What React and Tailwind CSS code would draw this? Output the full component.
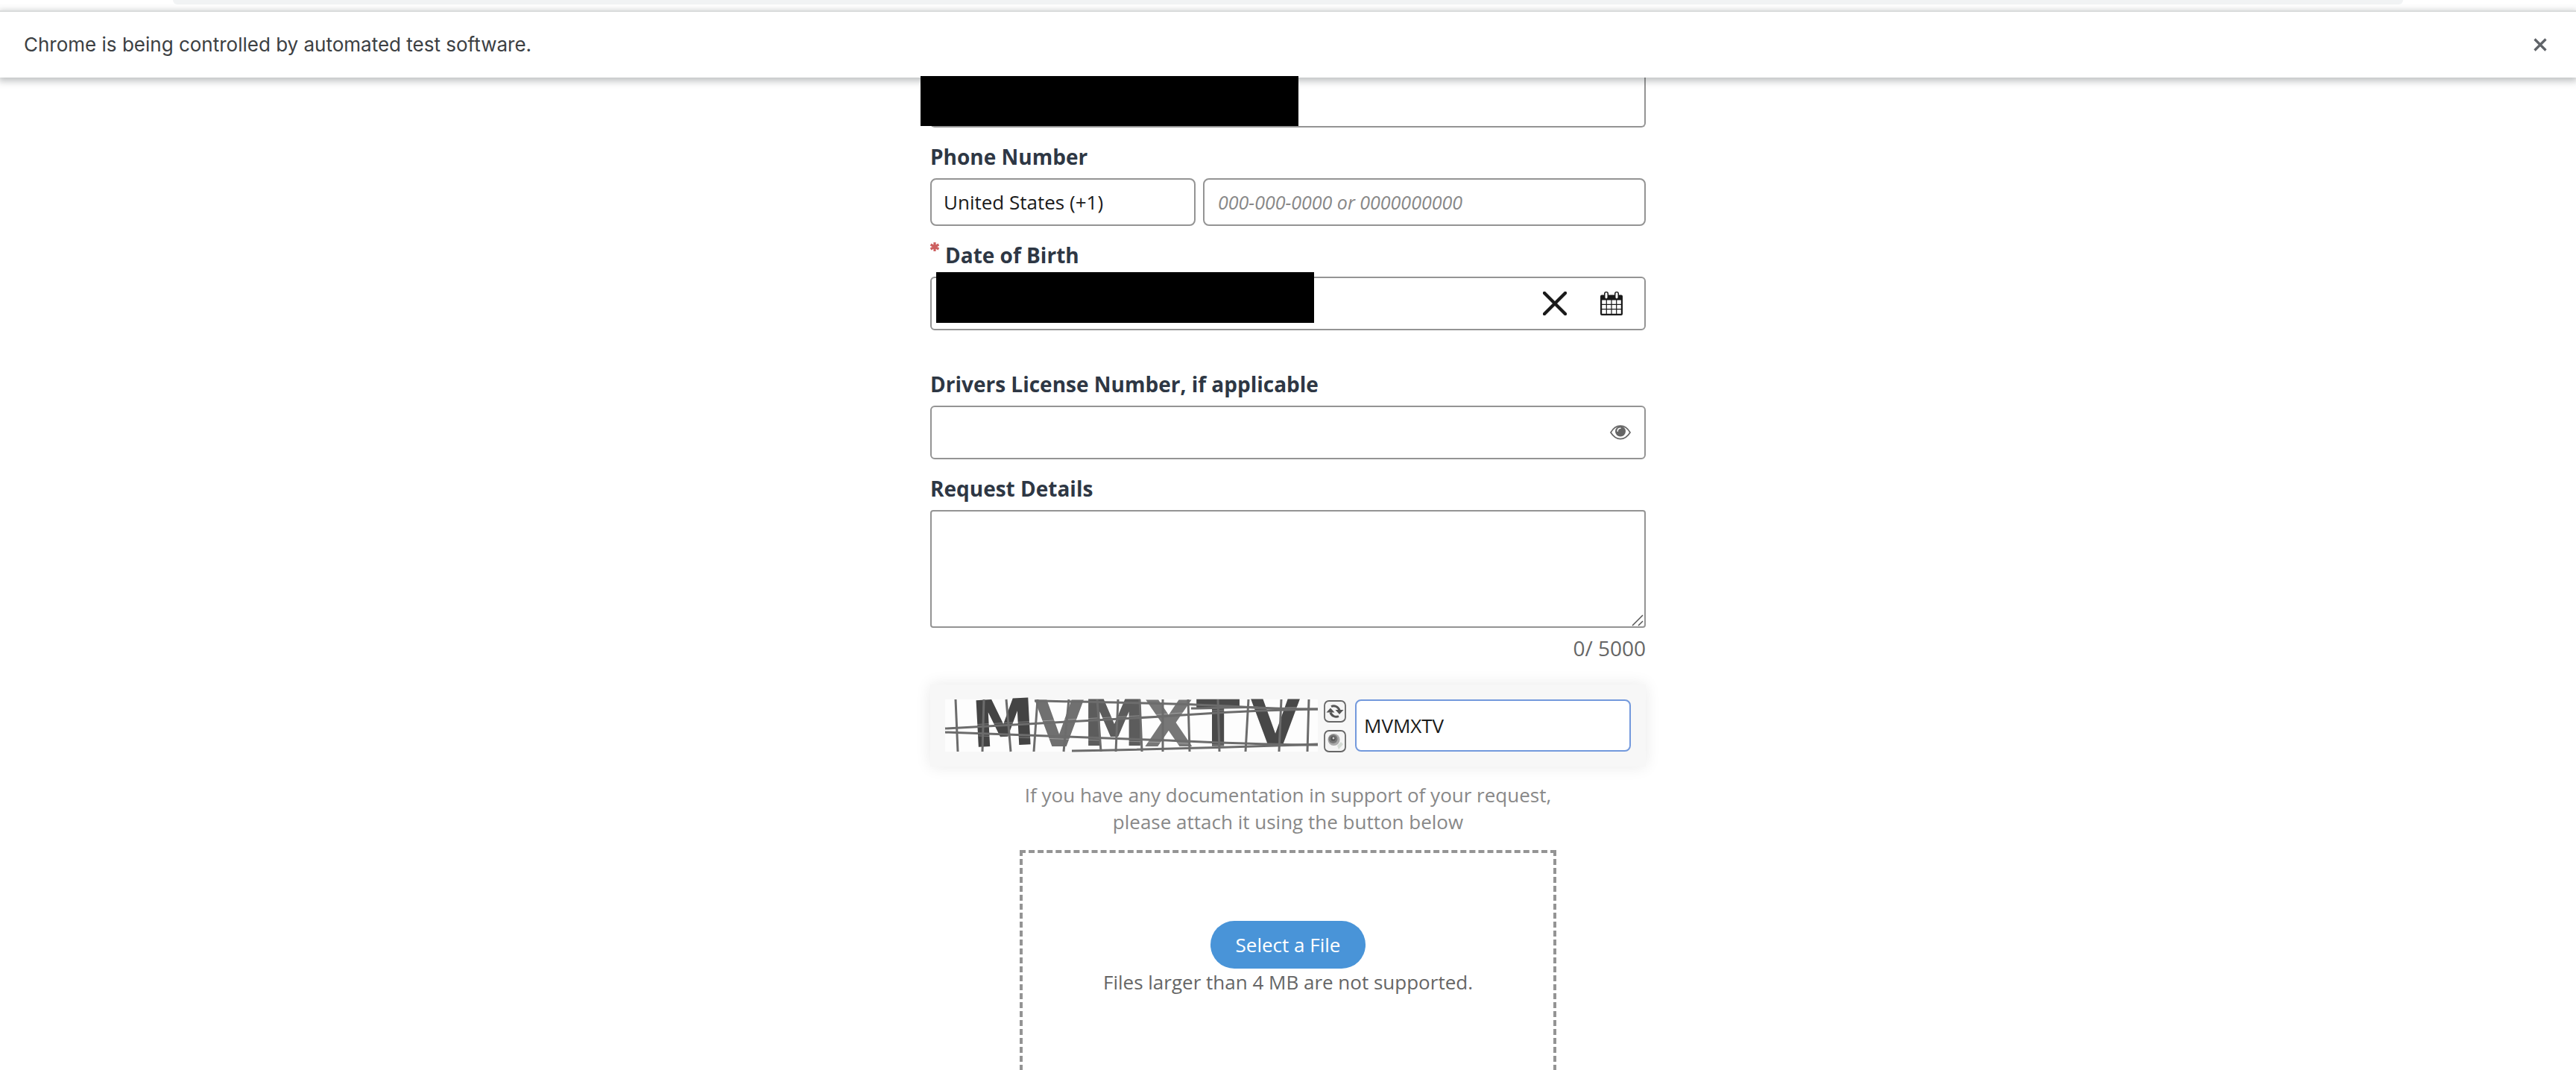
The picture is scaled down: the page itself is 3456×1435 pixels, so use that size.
import React from "react";

const FIELD = "w-full border-2 border-[#949494] bg-white text-[26px] text-[#1a1a1a] outline-none";

function Label({ htmlFor, required, children }) {
  return (
    <label
      htmlFor={htmlFor}
      className="mb-[9px] mt-[19px] flex gap-2 text-[28px] font-bold leading-10 text-[#2e3744]"
    >
      {required && <RequiredMark />}
      <span>{children}</span>
    </label>
  );
}

function RequiredMark() {
  return (
    <svg viewBox="0 0 12 12" className="mt-[3px] size-3" aria-label="required">
      <g stroke="#cd6060" strokeWidth="3.2">
        <path d="M6 0v12M0.6 3l10.8 6M0.6 9l10.8-6" />
      </g>
    </svg>
  );
}

function CalendarIcon() {
  return (
    <svg viewBox="0 0 30 32" className="h-8 w-[30px]" aria-hidden="true">
      <path
        fill="#1a1a1a"
        fillRule="evenodd"
        d="M2 4.5h3V3a3 3 0 0 1 6 0v1.500h8V3a3 3 0 0 1 6 0v1.500h3a2 2 0 0 1 2 2V30a2 2 0 0 1-2 2H2a2 2 0 0 1-2-2V6.500a2 2 0 0 1 2-2ZM2.200 11.500v18.200h25.600V11.500Z"
      />
      <path d="M8 2.800v5M22 2.800v5" stroke="#fff" strokeWidth="3" strokeLinecap="round" />
      <path
        d="M8.300 11v19M15 11v19M21.700 11v19M2 17.300h26M2 23.700h26"
        stroke="#1a1a1a"
        strokeWidth="1.200"
      />
    </svg>
  );
}

function EyeIcon() {
  return (
    <svg viewBox="0 0 28 20" className="h-5 w-7" aria-hidden="true">
      <path
        d="M1 10C4.500 4 9 1.200 14 1.200S23.500 4 27 10c-3.500 5.600-8 8.600-13 8.600S4.500 15.600 1 10Z"
        fill="none"
        stroke="#666"
        strokeWidth="1.700"
      />
      <circle cx="14" cy="8.500" r="7" fill="#666" />
      <path d="M10.200 8.200a4 4 0 0 1 3.800-4" fill="none" stroke="#fff" strokeWidth="1.500" strokeLinecap="round" />
    </svg>
  );
}

function CaptchaImage() {
  return (
    <svg
      viewBox="0 0 500 70"
      className="h-[70px] w-[500px] shrink-0 overflow-visible bg-[#fdfdfd]"
      role="img"
      aria-label="Captcha challenge"
    >
      <g fontFamily="DejaVu Sans" fontWeight="bold" fontSize="86" textAnchor="middle">
        <text x="78" y="62" fill="#444444" transform="rotate(-3 78 30)">M</text>
        <text x="153" y="63" fill="#707070">V</text>
        <text x="227" y="62" fill="#5c5c5c">M</text>
        <text x="300" y="63" fill="#777777">X</text>
        <text x="366" y="62" fill="#4a4a4a">T</text>
        <text x="443" y="62" fill="#484848">V</text>
      </g>
      <g fill="none" stroke="#fdfdfd" strokeOpacity="0.3" strokeWidth="1">
        <path d="M0 36C120 29 230 24 290 20C370 14 430 11 500 10" />
        <path d="M0 47C120 52 210 55 300 58C370 61 430 64 500 64" />
      </g>
      <g fill="none" stroke="#6c6c6c" strokeWidth="3">
        <path d="M14 0l3 70M52 0l-2 70M82 0l6 70M124 0l-5 70M166 0l-7 70M204 0l5 70M232 0l-3 70M261 0l3 70M292 0v70M326 0l2 70M366 0l2 70M407 0l-4 70M451 0l-3 70M488 0l-2 70" />
        <path d="M0 39C120 32 230 27 290 23C370 17 430 14 500 13" />
        <path d="M0 44C120 49 210 52 300 55C370 58 430 61 500 61" />
        <path d="M120 2C240 4 330 6 380 9C430 12 460 13 500 13" />
        <path d="M330 12C370 12 400 9 420 11" />
        <path d="M170 69C290 67 360 65 500 60" />
      </g>
    </svg>
  );
}

function IconFrame({ label, children }) {
  return (
    <button type="button" aria-label={label} className="size-[30px]">
      <svg viewBox="0 0 30 30" className="size-[30px]">
        <rect x="1" y="1" width="28" height="28" rx="6" fill="#f4f4f4" stroke="#666" strokeWidth="1.800" />
        {children}
      </svg>
    </button>
  );
}

function Redaction({ className }) {
  return <div aria-hidden="true" className={`absolute bg-black ${className}`} />;
}

function InfoBar() {
  return (
    <header className="relative z-10 shrink-0">
      <div className="h-[14px] bg-white px-[232px]">
        <div className="h-[6px] rounded-b-2xl bg-[#f1f3f4]" />
      </div>
      <div className="flex h-[90px] items-center justify-between border-t-2 border-[#dadcdc] bg-white px-8 shadow-[0_3px_9px_2px_rgba(60,64,67,0.32)]">
        <p className="font-['Inter'] text-[26px] leading-8 text-[#3c4043]">
          Chrome is being controlled by automated test software.
        </p>
        <button type="button" aria-label="Close" className="grid w-8 place-items-center">
          <svg viewBox="0 0 18 18" className="size-[18px]">
            <path d="M1.500 1.500l15 15M16.500 1.500l-15 15" stroke="#5f6368" strokeWidth="3.200" />
          </svg>
        </button>
      </div>
    </header>
  );
}

export default function App() {
  return (
    <div className="flex h-screen flex-col overflow-hidden bg-white font-['Open_Sans',sans-serif]">
      <InfoBar />
      <form className="mx-auto w-full max-w-[960px] shrink-0">
        <div className="relative">
          <input aria-label="Email" className={`${FIELD} block h-[67px] rounded-b-md border-t-0`} />
          <Redaction className="-left-[13px] -top-[2px] z-20 h-[67px] w-[507px]" />
        </div>

        <Label htmlFor="phone">Phone Number</Label>
        <div className="flex gap-[10px]">
          <select
            aria-label="Country code"
            className={`${FIELD} h-16 max-w-[356px] appearance-none rounded-lg px-4`}
          >
            <option>United States (+1)</option>
          </select>
          <input
            id="phone"
            type="tel"
            placeholder="000-000-0000 or 0000000000"
            className={`${FIELD} h-16 min-w-0 flex-1 rounded-lg px-[18px] placeholder:text-[25px] placeholder:italic placeholder:text-[#888]`}
          />
        </div>

        <Label htmlFor="dob" required>Date of Birth</Label>
        <div className="relative flex h-[72px] items-center rounded-md border-2 border-[#949494] pr-[29px]">
          <input id="dob" className="h-full min-w-0 flex-1 bg-transparent pl-4 text-[26px] outline-none" />
          <button type="button" aria-label="Clear date" className="mr-[45px]">
            <svg viewBox="0 0 32 32" className="size-8">
              <path d="M2 2l28 28M30 2L2 30" stroke="#1a1a1a" strokeWidth="4.400" strokeLinecap="round" />
            </svg>
          </button>
          <button type="button" aria-label="Open calendar">
            <CalendarIcon />
          </button>
          <Redaction className="-top-2 left-[6px] h-[68px] w-[507px]" />
        </div>

        <div className="mt-[52px]">
          <Label htmlFor="license">Drivers License Number, if applicable</Label>
        </div>
        <div className="flex h-[72px] items-center rounded-md border-2 border-[#949494] pr-[18px]">
          <input id="license" className="h-full min-w-0 flex-1 bg-transparent pl-4 text-[26px] outline-none" />
          <button type="button" aria-label="Show value">
            <EyeIcon />
          </button>
        </div>

        <Label htmlFor="details">Request Details</Label>
        <div className="relative">
          <textarea id="details" className={`${FIELD} block h-[158px] resize-none rounded px-4 py-2`} />
          <svg viewBox="0 0 16 16" className="absolute bottom-[2px] right-[3px] size-4" aria-hidden="true">
            <path d="M1 15L15 1M9 15l6-6" stroke="#555" strokeWidth="1.500" />
          </svg>
        </div>
        <p className="mt-[7px] text-right text-[28px] leading-10 text-[#666]">0/ 5000</p>

        <div className="mt-[29px] flex h-[110px] items-center bg-[#f7f7f7] px-5 shadow-[0_0_20px_rgba(0,0,0,0.09)]">
          <CaptchaImage />
          <div className="ml-2 flex flex-col gap-[10px] pt-[2px]">
            <IconFrame label="New captcha">
              <g fill="none" stroke="#555" strokeWidth="3">
                <path d="M10 8.500a8 8 0 0 1 11 5" />
                <path d="M20 21.500a8 8 0 0 1-11-5" />
              </g>
              <path d="M15.500 13h11L21 19ZM3.500 16.500h11L9 10.500Z" fill="#555" />
            </IconFrame>
            <IconFrame label="Play audio captcha">
              <path d="M18 21l5-5 3 3-6 7Z" fill="#d5dbd5" />
              <circle cx="13.500" cy="13" r="8" fill="#aaa" />
              <circle cx="12.500" cy="12" r="6" fill="#777" />
              <circle cx="12.500" cy="11.500" r="3.200" fill="#555" />
              <circle cx="13" cy="11" r="1.400" fill="#ccc" />
            </IconFrame>
          </div>
          <input
            aria-label="Captcha text"
            defaultValue="MVMXTV"
            className="ml-3 h-[70px] min-w-0 flex-1 rounded-lg border-2 border-[#7399dc] bg-white px-[10px] text-[26px] text-[#1a1a1a] outline-none"
          />
        </div>

        <p className="mt-5 text-center text-[26px] leading-9 text-[#888]">
          If you have any documentation in support of your request,
          <br />
          please attach it using the button below
        </p>

        <div className="mx-auto mt-5 flex h-[380px] max-w-[720px] flex-col items-center border-4 border-dashed border-[#949494] pt-[91px]">
          <button type="button" className="h-16 rounded-full bg-[#4994d8] px-[34px] text-[26px] text-white">
            Select a File
          </button>
          <p className="text-[26px] leading-9 text-[#666]">Files larger than 4 MB are not supported.</p>
        </div>
      </form>
    </div>
  );
}
